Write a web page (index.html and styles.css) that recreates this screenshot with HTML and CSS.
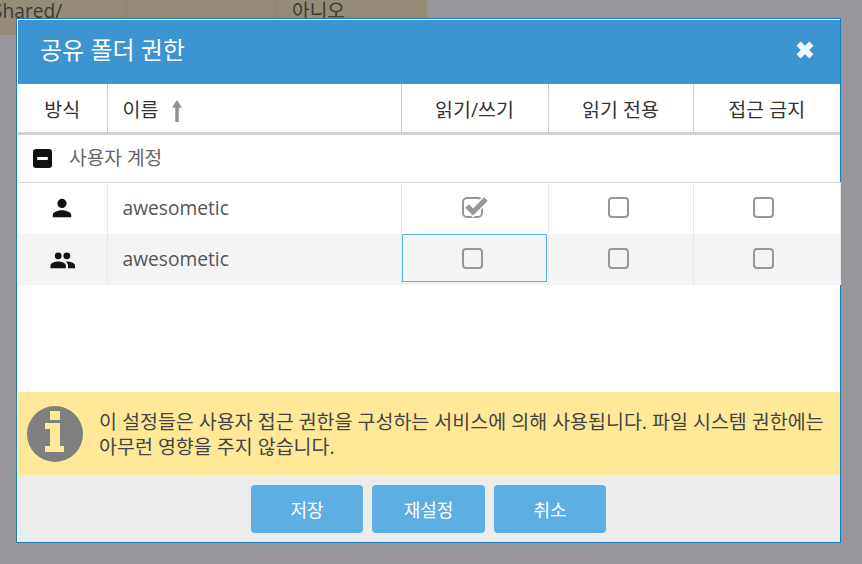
FILE: index.html
```html
<!DOCTYPE html>
<html lang="ko">
<head>
  <meta charset="UTF-8">
  <title>공유 폴더 권한</title>
  <link rel="stylesheet" href="styles.css">
</head>
<body>
  <!-- Page behind the dialog -->
  <div class="behind">
    <div class="behind-cell path">Shared/</div>
    <div class="behind-cell empty"></div>
    <div class="behind-cell guest">아니오</div>
  </div>

  <div class="dialog">
    <div class="dialog-title">
      <h1>공유 폴더 권한</h1>
      <svg class="close-icon" viewBox="0 0 18 18"><path d="M3.5 6.2 6.2 3.5 9 6.3l2.8-2.8 2.7 2.7L11.7 9l2.8 2.8-2.7 2.7L9 11.7l-2.8 2.8-2.7-2.7L6.3 9z"/></svg>
    </div>

    <table class="acl">
      <colgroup>
        <col class="col-type"><col class="col-name"><col class="col-perm"><col class="col-perm2"><col class="col-perm">
      </colgroup>
      <thead>
        <tr>
          <th>방식</th>
          <th class="name-head">이름 <svg class="sort-icon" viewBox="0 0 10 20"><path d="M5 0 9.500 7H6.600v13H3.400V7H.5z"/></svg></th>
          <th>읽기/쓰기</th>
          <th>읽기 전용</th>
          <th>접근 금지</th>
        </tr>
      </thead>
      <tbody>
        <tr class="group">
          <td colspan="5">
            <svg class="minus-icon" viewBox="0 0 18 18"><path fill-rule="evenodd" d="M3 0h12a3 3 0 0 1 3 3v12a3 3 0 0 1-3 3H3a3 3 0 0 1-3-3V3a3 3 0 0 1 3-3zm1 7.500v3h10v-3z"/></svg>
            <span>사용자 계정</span>
          </td>
        </tr>
        <tr>
          <td class="type">
            <svg class="user-icon" viewBox="0 0 24 24"><path d="M12 12a4.600 4.600 0 1 0 0-9.200 4.600 4.600 0 0 0 0 9.200zm0 2.300c-3.100 0-9.200 1.500-9.200 4.600v2.300h18.400v-2.300c0-3.100-6.100-4.600-9.200-4.600z"/></svg>
          </td>
          <td class="name">awesometic</td>
          <td class="perm">
            <svg class="check" viewBox="0 0 26 22"><rect x="1" y="2" width="19" height="19" rx="4"/><path class="tick-gap" d="M5 10l6 6L24 3"/><path class="tick" d="M5 10l6 6L24 3"/></svg>
          </td>
          <td class="perm"><span class="box"></span></td>
          <td class="perm"><span class="box"></span></td>
        </tr>
        <tr class="alt">
          <td class="type">
            <svg class="users-icon" viewBox="0 0 26 20"><path d="M17.500 9.200a3.500 3.500 0 1 0 0-7 3.500 3.500 0 0 0 0 7zm-9 0a3.500 3.500 0 1 0 0-7 3.500 3.500 0 0 0 0 7zm0 2.300C5.800 11.500.5 12.900.5 15.500v3h16v-3c0-2.600-5.300-4-8-4zm9 0c-.4 0-.8 0-1.200.100 1.400 1 2.400 2.300 2.400 3.900v3h7.300v-3c0-2.600-5.800-4-8.500-4z"/></svg>
          </td>
          <td class="name">awesometic</td>
          <td class="perm focused"><span class="box"></span></td>
          <td class="perm"><span class="box"></span></td>
          <td class="perm"><span class="box"></span></td>
        </tr>
      </tbody>
    </table>

    <div class="notice">
      <svg class="info-icon" viewBox="0 0 56 56"><path fill-rule="evenodd" d="M28 0a28 28 0 1 1 0 56 28 28 0 0 1 0-56zM23 5v9h10V5zM18 17v6h5v17h-5v6h19v-6h-4V17z"/></svg>
      <p>이 설정들은 사용자 접근 권한을 구성하는 서비스에 의해 사용됩니다. 파일 시스템 권한에는 아무런 영향을 주지 않습니다.</p>
    </div>

    <div class="buttons">
      <button>저장</button>
      <button>재설정</button>
      <button>취소</button>
    </div>
  </div>
</body>
</html>
```

FILE: styles.css
```css
/* Universal Styles */
html, body {
  height: 100%;
}

body {
  margin: 0;
  background: #97979b;
  font-family: 'Open Sans', 'Noto Sans CJK KR', sans-serif;
  color: #333;
  overflow: hidden;
}

/* Page behind the dialog */
.behind {
  display: flex;
  width: 427px;
  height: 35px;
  background: #958c78;
  color: #3c3a36;
  font-size: 19.2px;
  line-height: 22px;
  overflow: hidden;
}

.behind-cell {
  border-right: 1px solid #8c8471;
  height: 100%;
  box-sizing: border-box;
}

.path {
  width: 127px;
  text-indent: -8px;
}

.empty {
  width: 150px;
}

.guest {
  flex: 1;
  border-right: 0;
  padding-left: 15px;
}

/* Dialog */
.dialog {
  position: absolute;
  left: 16px;
  top: 18px;
  width: 825px;
  height: 525px;
  box-sizing: border-box;
  border: 1px solid #1a7bc0;
  padding: 1px 0 0 1px;
  background: #fff;
  display: flex;
  flex-direction: column;
}

.dialog-title {
  height: 64px;
  flex: none;
  background: #3c94d0;
  display: flex;
  align-items: center;
  justify-content: space-between;
  padding: 0 21px 4px 22px;
  box-sizing: border-box;
}

.dialog-title h1 {
  margin: 0 0 3px;
  font-size: 24px;
  font-weight: 400;
  color: #fff;
}

.close-icon {
  width: 28px;
  height: 28px;
  fill: #f0f5fa;
}

/* Table */
.acl {
  width: 822px;
  table-layout: fixed;
  border-collapse: collapse;
  flex: none;
}

.col-type { width: 89px; }
.col-name { width: 294px; }
.col-perm { width: 147px; }
.col-perm2 { width: 145px; }

.acl th {
  height: 48px;
  padding: 0;
  font-size: 19.5px;
  font-weight: 400;
  color: #333;
  border-left: 1px solid #cfcfcf;
  border-bottom: 3px solid #d2d2d2;
}

.acl th:first-child {
  border-left: 0;
}

.name-head {
  text-align: left;
  padding-left: 15px !important;
}

.sort-icon {
  width: 12px;
  height: 22px;
  margin-left: 8px;
  vertical-align: -5px;
  fill: #8c9488;
}

.group td {
  height: 49px;
  padding: 0 0 3px 15px;
  border-bottom: 1px solid #d5d5d5;
  font-size: 19.2px;
  color: #666;
  box-sizing: border-box;
}

.minus-icon {
  width: 19px;
  height: 19px;
  fill: #111;
  vertical-align: -3px;
  margin-right: 12px;
}

.acl tbody tr:not(.group) td {
  height: 51px;
  padding: 0 0 1px;
  box-sizing: border-box;
  border-left: 1px solid #e8e8e8;
}

.acl tbody tr:not(.group) td:first-child {
  border-left: 0;
}

.acl tbody tr:not(.group) td:last-child {
  border-right: 1px solid #e8e8e8;
}

.alt td {
  background: #f4f4f4;
}

.type {
  text-align: center;
}

.type svg {
  vertical-align: middle;
  fill: #111;
}

.user-icon {
  width: 24px;
  height: 24px;
}

.users-icon {
  width: 25px;
  height: 20px;
}

.name {
  font-size: 19.2px;
  color: #555;
  padding-left: 15px !important;
}

.perm {
  text-align: center;
  position: relative;
}

.box {
  display: inline-block;
  width: 21px;
  height: 21px;
  box-sizing: border-box;
  border: 2px solid #979797;
  border-radius: 4px;
  vertical-align: middle;
  margin: 0 4px 2px 0;
}

.perm:last-child .box {
  margin-right: 6px;
}

.check {
  width: 26px;
  height: 22px;
  vertical-align: middle;
  fill: none;
  margin-bottom: 2px;
}

.check rect {
  stroke: #979797;
  stroke-width: 2;
}

.tick-gap {
  stroke: #fff;
  stroke-width: 8;
  fill: none;
}

.tick {
  stroke: #979797;
  stroke-width: 5;
  fill: none;
}

.focused::after {
  content: "";
  position: absolute;
  left: 0;
  top: 0;
  right: 1px;
  bottom: 3px;
  border: 1px solid #5aade2;
}

/* Notice */
.notice {
  margin-top: auto;
  height: 83px;
  flex: none;
  background: #ffe897;
  display: flex;
  align-items: center;
  padding: 0 10px 0 9px;
  box-sizing: border-box;
  gap: 16px;
}

.info-icon {
  width: 56px;
  height: 56px;
  fill: #7f7f7f;
  flex: none;
}

.notice p {
  margin: 0;
  font-size: 19.5px;
  line-height: 25px;
  color: #444;
}

/* Buttons */
.buttons {
  height: 67px;
  flex: none;
  background: #ececec;
  display: flex;
  justify-content: center;
  align-items: flex-start;
  gap: 9px;
  padding: 10px 1px 0 0;
  box-sizing: border-box;
}

button {
  width: 112.5px;
  height: 48px;
  border: none;
  border-radius: 4px;
  background: #5daee3;
  color: #fff;
  font-family: inherit;
  font-size: 18px;
}
```
